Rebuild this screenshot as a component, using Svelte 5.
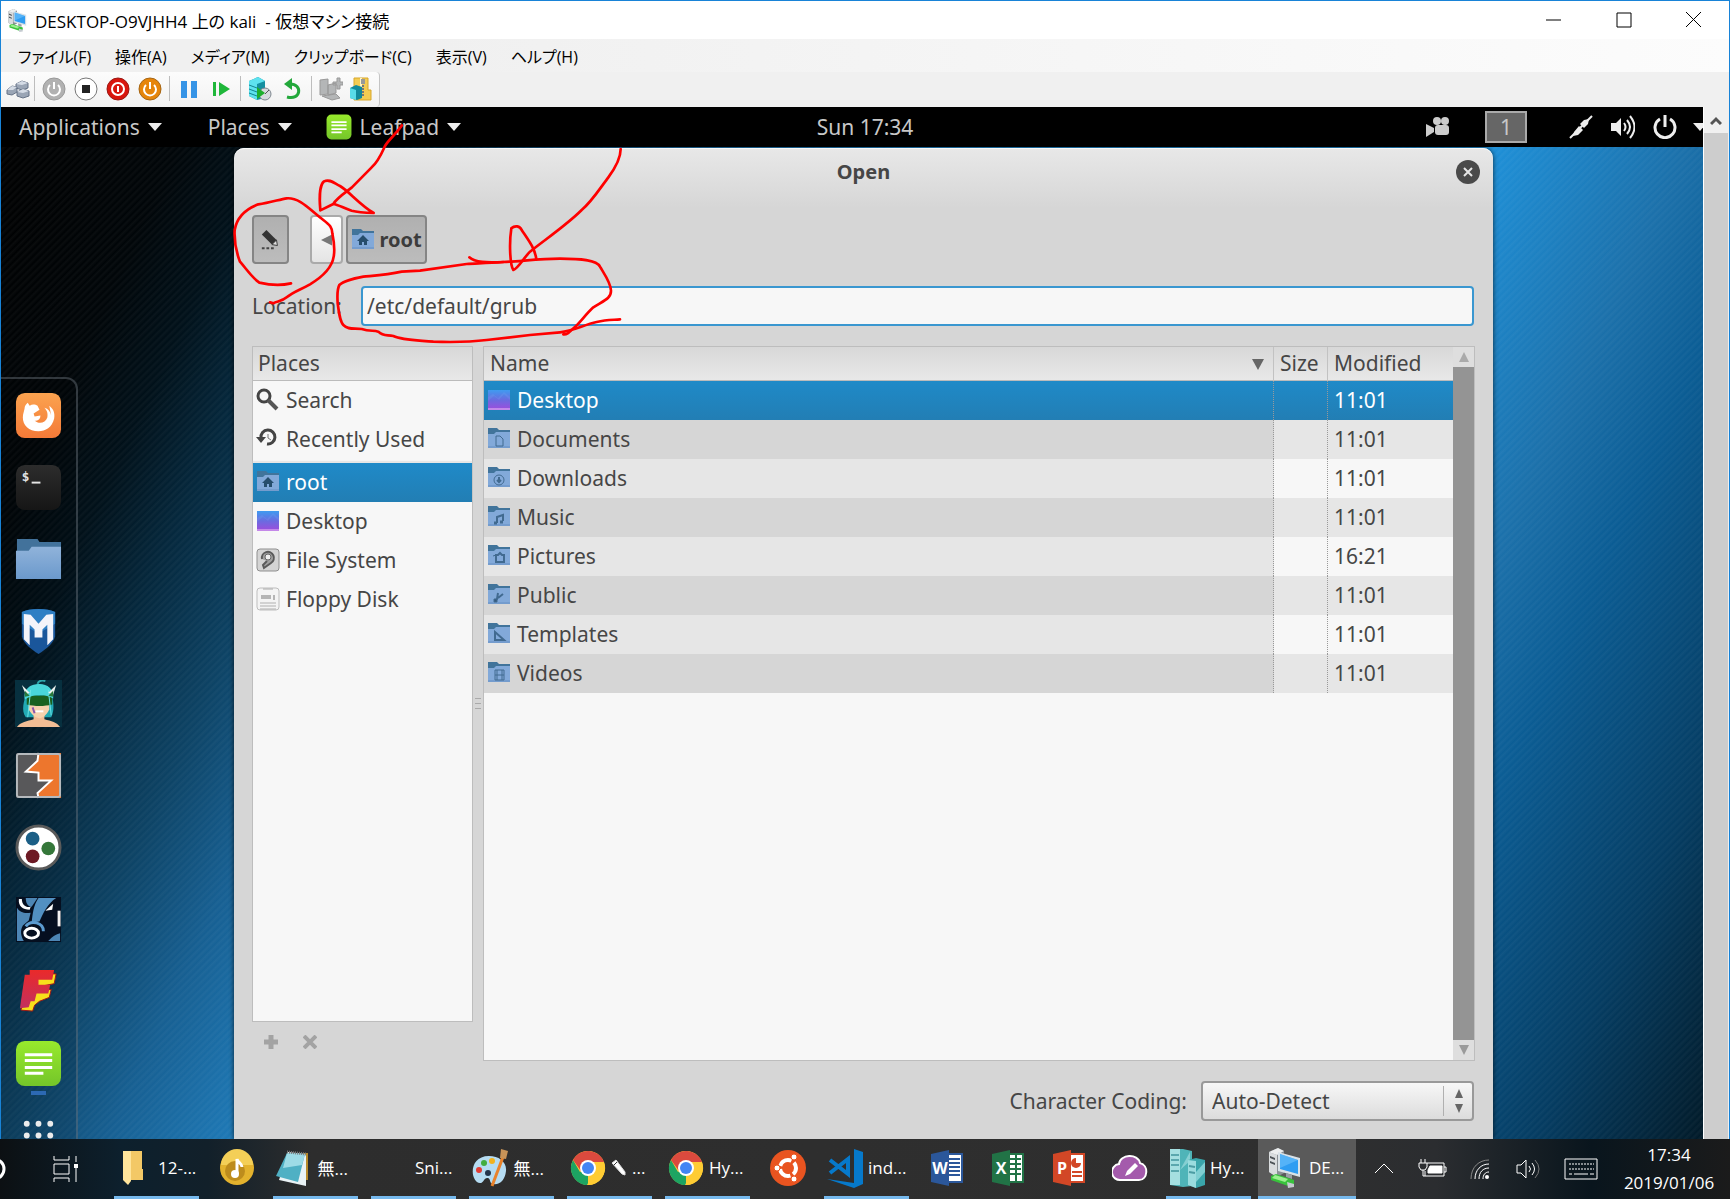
<script>
  const menus = ['ファイル(F)', '操作(A)', 'メディア(M)', 'クリップボード(C)', '表示(V)', 'ヘルプ(H)'];
  const places = [
    { label: 'Search', icon: 'search' },
    { label: 'Recently Used', icon: 'recent' },
    { label: 'root', icon: 'home', active: true },
    { label: 'Desktop', icon: 'desktop' },
    { label: 'File System', icon: 'disk' },
    { label: 'Floppy Disk', icon: 'floppy' }
  ];
  const files = [
    { name: 'Desktop', time: '11:01', icon: 'desktop', active: true },
    { name: 'Documents', time: '11:01', icon: 'documents' },
    { name: 'Downloads', time: '11:01', icon: 'downloads' },
    { name: 'Music', time: '11:01', icon: 'music' },
    { name: 'Pictures', time: '16:21', icon: 'pictures' },
    { name: 'Public', time: '11:01', icon: 'public' },
    { name: 'Templates', time: '11:01', icon: 'templates' },
    { name: 'Videos', time: '11:01', icon: 'videos' }
  ];
  const dock = ['firefox', 'terminal', 'files', 'metasploit', 'armitage', 'burp', 'maltego', 'beef', 'faraday', 'leafpad', 'apps'];
  const tasks = [
    { icon: 'folder', label: '12-...', wide: true },
    { icon: 'tune', name: 'Music' },
    { icon: 'notepad', label: '無...', wide: true },
    { icon: 'blank', label: 'Sni...', wide: true },
    { icon: 'paint', label: '無...', wide: true },
    { icon: 'chrome', label: '...', pencil: true, wide: true },
    { icon: 'chrome', label: 'Hy...', wide: true },
    { icon: 'ubuntu', name: 'Ubuntu' },
    { icon: 'code', label: 'ind...', wide: true },
    { icon: 'word', name: 'Word' },
    { icon: 'excel', name: 'Excel' },
    { icon: 'ppt', name: 'PowerPoint' },
    { icon: 'cloud', name: 'Notes' },
    { icon: 'hyperv', label: 'Hy...', wide: true },
    { icon: 'vm', label: 'DE...', wide: true, current: true }
  ];
  let location = $state('/etc/default/grub');
</script>

{#snippet vmIcon()}
  <path d="M1 4l9-4 6 3v22l-7 4-8-5z" fill="#8b9196" />
  <path d="M1 4l8 3v22l-8-5z" fill="#d9dcde" />
  <path d="M1 4l9-4 6 3-7 4z" fill="#eceeef" />
  <path d="M2 8l5 2v2l-5-2zM2 13l5 2v2l-5-2z" fill="#4d5358" />
  <path d="M10 4l22 6v19l-22-6z" fill="#d9e2e8" />
  <path d="M12 6l18 6v14l-18-5z" fill="#2f9df2" />
  <path d="M12 6l18 6-18 8z" fill="#6fc1fb" opacity=".6" />
  <path d="M18 25l6 2v4l-6-2z" fill="#9aa1a6" />
  <path d="M3 28l5-2 18 6v4l-6 2-17-6z" fill="#38c23c" />
  <path d="M7 27l13 4-3 3-13-4z" fill="#9bf08f" />
  <path d="M19 34l7 2v3l-6 1z" fill="#c5cbd0" />
{/snippet}

{#snippet small(kind)}
  <svg class="small-icon" viewBox="0 0 24 24" aria-hidden="true">
    {#if kind === 'search'}
      <circle cx="8" cy="8" r="6" fill="none" stroke="#444" stroke-width="3" />
      <path d="M12 12l9 9" stroke="#555" stroke-width="4" />
    {:else if kind === 'recent'}
      <path d="M5 11a7 7 0 1 1 6 6" fill="none" stroke="#444" stroke-width="3" />
      <path d="M0 10h10l-5 6z" fill="#444" />
      <path d="M12 7v4l3 2" fill="none" stroke="#777" stroke-width="1" />
    {:else if kind === 'desktop'}
      <defs>
        <linearGradient id="violet" x2="0" y2="1">
          <stop stop-color="#3f9bf0" /><stop offset=".5" stop-color="#6a6be0" /><stop offset="1" stop-color="#a04bdc" />
        </linearGradient>
      </defs>
      <rect x="1" y="2" width="22" height="20" fill="url(#violet)" />
      <path d="M1 13l6-5 5 4 5-6 6 6v-3l-6-5-6 6-5-4-5 3z" fill="#9cc3f8" opacity=".12" />
      <path d="M1 21h22" stroke="#ecc3f5" stroke-width="1" />
    {:else if kind === 'disk'}
      <rect x="1" y="1" width="22" height="22" rx="3" fill="#d4d4d4" stroke="#8f8f8f" />
      <path d="M6 11a6 6 0 1 1 9 4l-7 5-1-3 4-4" fill="#a0a0a0" stroke="#5a5a5a" stroke-width="2" />
      <circle cx="12" cy="9" r="3" fill="#eee" stroke="#666" />
    {:else if kind === 'floppy'}
      <rect x="1" y="1" width="22" height="22" rx="3" fill="#f4f4f4" stroke="#bdbdbd" />
      <path d="M5 8h10v4H5zM17 8h2v5h-2z" fill="#b5b5b5" />
      <path d="M4 16h16M4 19h16M4 22h16" stroke="#b0b0b0" stroke-width="1" />
      <path d="M7 2h10" stroke="#aaa" />
    {:else}
      <path d="M1 1h9l2 2h11v5H1z" fill="#41749b" />
      <path d="M1 7h6l2-2h14v16H1z" fill="#82a9d9" />
      <path d="M1 20h22" stroke="#668fc2" />
      <g fill="none" stroke="#416a90" stroke-width="1">
        {#if kind === 'home'}
          <path d="M12 7l6 6h-2v4h-3v-3h-2v3H8v-4H6z" fill="#264d6c" stroke="none" />
        {:else if kind === 'documents'}
          <path d="M9 9h4l3 3v7H9z" />
        {:else if kind === 'downloads'}
          <circle cx="12" cy="14" r="5" /><path d="M12 11v5M10 14l2 2 2-2" stroke-width="2" />
        {:else if kind === 'music'}
          <path d="M10 18v-6l6-2v6" stroke-width="2" /><path d="M7 18h3M13 17h3" stroke-width="3" />
        {:else if kind === 'pictures'}
          <path d="M9 11h2l2-2 2 2h2v7H9z" stroke-width="2" /><path d="M6 12l3-1" />
        {:else if kind === 'public'}
          <path d="M8 18l2-2 1-6M11 15l5-4" stroke-width="2" /><path d="M7 16h3v3H7z" fill="#35597c" />
        {:else if kind === 'templates'}
          <path d="M8 10v8h9z" stroke-width="2" />
        {:else if kind === 'videos'}
          <path d="M8 9h9v10H8zM8 14h9M10 9v10M15 9v10" />
        {/if}
      </g>
    {/if}
  </svg>
{/snippet}

{#snippet dockIcon(kind)}
  <svg viewBox="0 0 48 48" aria-hidden="true">
    {#if kind === 'firefox'}
      <defs>
        <linearGradient id="fox" x2="0" y2="1"><stop stop-color="#fba34f" /><stop offset="1" stop-color="#f47a38" /></linearGradient>
      </defs>
      <rect x="1" y="1" width="46" height="46" rx="9" fill="url(#fox)" />
      <path d="M10 15c1-2 2-3 3-4l2 3c3-2 6-1 8 0l2 4-6 4 1 3 6-1c0 4-3 6-6 5 4 4 11 3 13-3 1-5-1-8-3-10 4 1 6 4 7 8l-2-10c4 3 6 7 5 13-2 9-9 13-16 13C14 40 8 34 8 26c0-4 2-8 2-11z" fill="#fff" />
    {:else if kind === 'terminal'}
      <defs>
        <linearGradient id="term" x2="0" y2="1"><stop stop-color="#2c2c2c" /><stop offset="1" stop-color="#161616" /></linearGradient>
      </defs>
      <rect x="1" y="1" width="46" height="46" rx="9" fill="url(#term)" />
      <text x="7" y="17" class="prompt">$</text>
      <path d="M17 19h9" stroke="#e4e4e4" stroke-width="2" />
    {:else if kind === 'files'}
      <defs>
        <linearGradient id="dir" x2="0" y2="1"><stop stop-color="#90b3da" /><stop offset="1" stop-color="#6b99cc" /></linearGradient>
      </defs>
      <path d="M2 3h21l2 3h22v12H2z" fill="#42729b" />
      <path d="M1 15h13l3-4h30v33H1z" fill="url(#dir)" />
    {:else if kind === 'metasploit'}
      <path d="M24 1c7 0 13 1 17 3v25c-2 7-8 12-17 18C15 41 9 36 7 29V4c4-2 10-3 17-3z" fill="#1a569b" />
      <path d="M24 1c7 0 13 1 17 3v12L24 26 7 16V4c4-2 10-3 17-3z" fill="#2f7fc4" />
      <path d="M9 6l7 1 8 9 8-9 7-1v26l-6 6V17l-5 5v8h-8v-8l-5-5v21l-6-6z" fill="#f4f4fa" />
    {:else if kind === 'armitage'}
      <rect width="48" height="48" fill="#07303f" />
      <path d="M11 38c-5-7-2-16 1-26C16 2 32 2 37 12c2 9 4 18 0 26z" fill="#22a9b4" />
      <path d="M2 48c3-5 11-6 17-8v-8h11v8c7 2 13 3 16 8z" fill="#f2bd95" />
      <path d="M14 18h21v12c-3 6-6 8-10 9-5-1-8-4-11-9z" fill="#f6d2ad" />
      <path d="M12 13c8 4 17 4 26 0v12c-8 2-18 2-26 0z" fill="#19611f" />
      <path d="M10 20C8 8 17 4 25 4s15 5 14 15c-8-5-20-5-29 1z" fill="#49d6da" />
      <path d="M16 10l-3 28M34 10l3 26" stroke="#6ce4e6" stroke-width="1" />
      <path d="M23 4c1-3 4-4 8-3" fill="none" stroke="#2fa7ad" stroke-width="2" />
      <path d="M7 5l8 8-4 2zM42 5l-8 8 5 2z" fill="#e9f2ee" />
      <path d="M10 11l5 5-5 1zM39 11l-5 5 5 1z" fill="#2a7a3b" />
      <path d="M21 32h8" stroke="#fff" stroke-width="2" /><path d="M18 28l2 6" stroke="#8c57ad" stroke-width="2" />
    {:else if kind === 'burp'}
      <rect x="1" y="1" width="46" height="46" rx="2" fill="#58585a" />
      <path d="M23 1h24v46H24l-1-5 14-13H24v-8l-13-1 11-10z" fill="#ed762d" />
      <path d="M24 1l-1 8-12 11 13 1v8h13L23 42l1 5" fill="none" stroke="#fff" stroke-width="2" />
      <rect x="2" y="2" width="44" height="44" rx="2" fill="none" stroke="#b5b9bd" stroke-width="2" />
    {:else if kind === 'maltego'}
      <circle cx="24" cy="24" r="22" fill="#fff" stroke="#5a5a5a" stroke-width="3" />
      <circle cx="18" cy="15" r="7" fill="#1c5f86" /><circle cx="34" cy="25" r="7" fill="#35773a" /><circle cx="18" cy="33" r="7" fill="#6d1a24" />
    {:else if kind === 'beef'}
      <rect x="1" y="1" width="46" height="46" fill="#050f20" />
      <path d="M2 12c3 5 8 6 14 5l-2 8-6 5c-3 5-2 11 1 16H2z" fill="#4d86b5" />
      <path d="M11 2h12l-6 9c-4 0-6-4-6-9z" fill="#4d86b5" />
      <path d="M24 2h18C33 8 29 17 25 26l-8 1c1-9 2-18 7-25z" fill="#5290c2" />
      <path d="M11 31c5-7 18-4 18 5" fill="none" stroke="#5b9bd0" stroke-width="3" />
      <path d="M7 3c0 6 4 9 9 8l-1 3C8 14 3 10 4 3z" fill="#fff" />
      <path d="M31 15l8-7-1 6z" fill="#fff" /><path d="M45 15v16" stroke="#f3f3f3" stroke-width="3" />
      <ellipse cx="17" cy="38" rx="7" ry="5" fill="#050f20" stroke="#fff" stroke-width="3" />
      <path d="M34 46c4-5 8-7 12-8v8z" fill="#4d86b5" />
    {:else if kind === 'faraday'}
      <defs>
        <linearGradient id="flash" x2="0" y2="1"><stop stop-color="#ea2a2a" /><stop offset="1" stop-color="#c2305e" /></linearGradient>
      </defs>
      <path d="M18 6h24l-2 10-15 3v3h12l-2 8-10 4-5 4-2 6-12-1z" fill="#f7df1b" stroke="#a01515" stroke-width="1" />
      <path d="M15 2h25l-2 10H24v5h12l-2 9H22l-2 8h-4l-2 6-9 1L10 7h5z" fill="url(#flash)" />
    {:else if kind === 'leafpad'}
      <defs>
        <linearGradient id="leaf" x2="0" y2="1"><stop stop-color="#98ea2c" /><stop offset="1" stop-color="#74c52a" /></linearGradient>
      </defs>
      <rect x="1" y="1" width="46" height="46" rx="9" fill="url(#leaf)" />
      <path d="M10 15h28M10 21h28M10 28h28M10 34h19" stroke="#fff" stroke-width="3" />
    {:else}
      <g fill="#ececec">
        {#each [12, 24, 36] as cy}
          {#each [12, 24, 36] as cx}<circle {cx} {cy} r="3" />{/each}
        {/each}
      </g>
    {/if}
  </svg>
{/snippet}

{#snippet taskIcon(kind)}
  <svg class="task-icon" viewBox="0 0 36 40" aria-hidden="true">
    {#if kind === 'folder'}
      <path d="M9 3h16v18h1v11H9z" fill="#f3c866" /><path d="M6 3h8v30l-3 4-5-5z" fill="#ffe49b" />
    {:else if kind === 'tune'}
      <circle cx="18" cy="20" r="17" fill="#e3b22d" /><path d="M2 17a16 16 0 0 1 32 0z" fill="#f4cf57" />
      <circle cx="16" cy="23" r="10" fill="#bd8c1d" /><path d="M18 26V11c1 4 5 4 5 8" fill="none" stroke="#fff" stroke-width="3" /><circle cx="16" cy="26" r="4" fill="#fff" />
    {:else if kind === 'notepad'}
      <path d="M27 5h5v27h-5z" fill="#b88b2b" /><path d="M12 4l18 2v32L3 32z" fill="#e9f2f5" /><path d="M11 5l18 1-7 28L0 28z" fill="#4fb0c4" />
      <path d="M11 5l18 1-3 11-19 3z" fill="#9ddbe6" /><path d="M11 4l19 2" stroke="#777" stroke-width="3" stroke-dasharray="1 1" />
    {:else if kind === 'paint'}
      <path d="M17 8c10 0 18 6 17 15s-6 14-13 13c-4-1-2-5-5-6-4-1-4 5-8 5C-2 34-4 8 17 8z" fill="#b5dcf2" />
      <circle cx="7" cy="22" r="3" fill="#e33b33" /><circle cx="12" cy="15" r="3" fill="#42ad3f" /><circle cx="20" cy="13" r="3" fill="#f2b21d" /><circle cx="16" cy="25" r="3" fill="#23344a" />
      <path d="M31 9L20 38" stroke="#e8822b" stroke-width="3" /><path d="M29 1l7 2-2 8-6-1z" fill="#c79358" />
    {:else if kind === 'chrome'}
      <circle cx="18" cy="20" r="17" fill="#fc3" />
      <path d="M10 24l8-4v17h-3A17 17 0 0 1 3 12z" fill="#1da462" />
      <path d="M3 12a17 17 0 0 1 31 2H18l-7 9z" fill="#db4a3e" />
      <path d="M25 22l-8 15A17 17 0 0 0 34 14H18z" fill="#fc3" />
      <circle cx="18" cy="20" r="8" fill="#fff" /><circle cx="18" cy="20" r="6" fill="#4285f4" />
    {:else if kind === 'ubuntu'}
      <circle cx="18" cy="20" r="18" fill="#e95420" /><circle cx="18" cy="20" r="8" fill="none" stroke="#fff" stroke-width="4" stroke-dasharray="14 3" stroke-dashoffset="7" />
      <g fill="#fff" stroke="#e95420"><circle cx="7" cy="20" r="3" /><circle cx="24" cy="9" r="3" /><circle cx="24" cy="31" r="3" /></g>
    {:else if kind === 'code'}
      <path d="M27 1l9 3v32l-9 4z" fill="#0679cb" /><path d="M0 31l27 4v5z" fill="#0679cb" />
      <path d="M3 12l18 14V11L3 25" fill="none" stroke="#0679cb" stroke-width="4" />
    {:else if kind === 'word' || kind === 'excel' || kind === 'ppt'}
      {@const tint = kind === 'word' ? '#2b579a' : kind === 'excel' ? '#217346' : '#d24726'}
      <path d="M18 6h15v28H18z" fill="#fff" stroke={tint} stroke-width="2" />
      {#if kind === 'word'}
        <path d="M20 11h11M20 15h11M20 19h11M20 23h11M20 27h11" stroke={tint} stroke-width="2" />
      {:else if kind === 'excel'}
        <path d="M20 11h11M20 16h11M20 21h11M20 26h11M26 7v26" stroke={tint} stroke-width="2" />
      {:else}
        <circle cx="25" cy="15" r="5" fill={tint} /><path d="M25 15V9h6v6z" fill="#fff" /><path d="M21 24h10M21 28h10" stroke={tint} stroke-width="2" />
      {/if}
      <path d="M2 6l18-4v36L2 34z" fill={tint} />
      <text x="11" y="26" class="letter">{kind === 'word' ? 'W' : kind === 'excel' ? 'X' : 'P'}</text>
    {:else if kind === 'cloud'}
      <path d="M9 32a8 8 0 0 1-2-16c1-10 19-11 21-1 9 2 8 17-1 17z" fill="#a45bac" stroke="#fff" stroke-width="2" />
      <path d="M13 28l2-5 8-8 3 3-8 8z" fill="#fff" />
    {:else if kind === 'hyperv'}
      <path d="M1 1h13l9 2v35l-9 1-13-2z" fill="#4fb4b8" /><path d="M1 1h10v36H1z" fill="#a5dfe0" /><path d="M2 7h8M2 12h8M2 17h8M2 23h8" stroke="#5aa7ad" stroke-width="2" />
      <path d="M11 22l10-18v9z" fill="#86cfd2" />
      <path d="M19 12l8-2 9 2v25l-9 3-8-3z" fill="#3aa5aa" /><path d="M19 12l8 1v27l-8-3z" fill="#9adcde" /><path d="M20 18l6 1M20 24l6 1" stroke="#4c9ca3" stroke-width="2" />
      <path d="M27 24l9-10v10l-9 10z" fill="#7fcfd2" />
    {:else if kind === 'vm'}
      {@render vmIcon()}
    {/if}
  </svg>
{/snippet}

<div class="screen">
  <main class="window">
    <header class="titlebar">
      <svg class="app-icon" viewBox="0 0 32 40" aria-hidden="true">{@render vmIcon()}</svg>
      <h1>DESKTOP-O9VJHH4 上の kali &nbsp;- 仮想マシン接続</h1>
      <div class="controls">
        <button aria-label="Minimize"><svg viewBox="0 0 16 16"><path d="M0 8h15" /></svg></button>
        <button aria-label="Maximize"><svg viewBox="0 0 16 16"><path d="M1 1h14v14H1z" /></svg></button>
        <button aria-label="Close"><svg viewBox="0 0 16 16"><path d="M0 0l15 15M15 0L0 15" /></svg></button>
      </div>
    </header>

    <nav class="menubar">
      {#each menus as menu}<button>{menu}</button>{/each}
    </nav>

    <div class="toolbar">
      <div class="tools">
        <button aria-label="Ctrl+Alt+Del">
          <svg viewBox="0 0 24 24"><path d="M1 13l5-4 5 1v5l-5 3-5-1zM10 7l6-3 6 2v5l-6 2-6-2zM11 15l6-3 6 2v5l-6 2-6-2z" fill="#9aa5b5" stroke="#667387" /><path d="M10 7l6-3 6 2-6 2zM11 15l6-3 6 2-6 2zM1 13l5-4 5 1-4 3z" fill="#d5dce6" /></svg>
        </button>
        <i></i>
        <button aria-label="Start"><svg viewBox="0 0 24 24"><circle cx="12" cy="12" r="11" fill="#b1b1b1" stroke="#999" /><path d="M8 8a6 6 0 1 0 8 0M12 5v7" fill="none" stroke="#fff" stroke-width="2" /></svg></button>
        <button aria-label="Turn off"><svg viewBox="0 0 24 24"><circle cx="12" cy="12" r="11" fill="#fff" stroke="#777" /><path d="M8 8h8v8H8z" fill="#222" /></svg></button>
        <button aria-label="Shut down"><svg viewBox="0 0 24 24"><circle cx="12" cy="12" r="11" fill="#d9150d" stroke="#991914" /><circle cx="12" cy="12" r="6" fill="none" stroke="#fff" stroke-width="2" /><path d="M12 9v6" stroke="#fff" stroke-width="2" /></svg></button>
        <button aria-label="Save"><svg viewBox="0 0 24 24"><circle cx="12" cy="12" r="11" fill="#e6850a" stroke="#a66615" /><path d="M8 8a6 6 0 1 0 8 0M12 5v7" fill="none" stroke="#fff" stroke-width="2" /></svg></button>
        <i></i>
        <button aria-label="Pause"><svg viewBox="0 0 24 24"><path d="M4 4h6v17H4zM14 4h6v17h-6z" fill="#3694e6" /></svg></button>
        <button aria-label="Reset"><svg viewBox="0 0 24 24"><path d="M4 5h3v14H4zM10 5l11 7-11 7z" fill="#1fb73a" /></svg></button>
        <i></i>
        <button aria-label="Checkpoint"><svg viewBox="0 0 24 24"><path d="M1 4l9-4 7 4v17l-8 2-8-4z" fill="#158fa0" /><path d="M1 4l8 3v16l-8-4zM1 4l9-4 7 4-8 3z" fill="#5ee2ef" /><path d="M1 8l8 3M1 12l8 3M1 16l8 3" stroke="#14838f" /><circle cx="17" cy="17" r="6" fill="#d7dade" stroke="#808890" /><path d="M17 17l4-4" stroke="#555" /><path d="M9 10l8 6-8 6z" fill="#1eaf2d" /></svg></button>
        <button aria-label="Revert"><svg viewBox="0 0 24 24"><path d="M7 20c14 4 16-13 3-13" fill="none" stroke="#23a83b" stroke-width="3" /><path d="M12 1v12L4 7z" fill="#23a83b" /></svg></button>
        <i></i>
        <button aria-label="Enhanced session"><svg viewBox="0 0 24 24"><path d="M1 3l8-1v15l-8 1zM9 8l8-2v10l-8 2zM18 1h3v4h3v3h-3v4h-3V8h-4V5h4zM3 19l14-2 4 4-8 2z" fill="#b4b6b7" stroke="#999" /></svg></button>
        <button aria-label="Share"><svg viewBox="0 0 24 24"><path d="M5 1h14v12h3v10H5z" fill="#f4cc52" stroke="#d8a72a" /><path d="M12 1v12" stroke="#fff3c4" stroke-width="2" /><path d="M14 2v18" stroke="#777" stroke-width="2" stroke-dasharray="2 1" /><path d="M12 2h4v5h-4z" fill="#999" /><path d="M1 11l6-3 6 2v11l-5 2-7-2z" fill="#128a9a" /><path d="M1 11l6 2v10l-6-2z" fill="#58dce8" /></svg></button>
      </div>
    </div>

    <div class="viewport">
      <section class="guest">
        <header class="panel">
          <div class="panel-left">
            <button>Applications <b class="down"></b></button>
            <button>Places <b class="down"></b></button>
            <button class="leaf"><span>{@render dockIcon('leafpad')}</span>Leafpad <b class="down"></b></button>
          </div>
          <time>Sun 17:34</time>
          <div class="panel-right">
            <svg viewBox="0 0 24 20"><g fill="#ccc"><circle cx="11" cy="4" r="4" /><circle cx="19" cy="4" r="4" /><rect x="9" y="8" width="14" height="10" rx="3" /><path d="M0 7l8 4v4l-8 5z" /></g></svg>
            <span class="workspace">1</span>
            <svg class="plug" viewBox="0 0 24 24"><path d="M1 23L23 1" stroke="#eee" stroke-width="2" /><path d="M5 17l5-6 4 4-5 5-5 1zM11 9l4-4 5-1-1 5-4 4z" fill="#eee" /></svg>
            <svg viewBox="0 0 24 24"><path d="M0 8h5l5-5v18l-5-5H0z" fill="#eee" /><path d="M13 8q3 4 0 8M16 5q6 7 0 14M19 1q9 11 0 22" fill="none" stroke="#eee" stroke-width="2" /></svg>
            <svg class="power" viewBox="0 0 24 24"><path d="M7 4a10 10 0 1 0 10 0M12 0v12" fill="none" stroke="#eee" stroke-width="3" /></svg>
            <b class="down"></b>
          </div>
        </header>

        <div class="desktop">
          <aside class="dock">
            {#each dock as item}
              <button aria-label={item} class:running={item === 'leafpad'}>{@render dockIcon(item)}</button>
            {/each}
          </aside>

          <form class="dialog" onsubmit={(e) => e.preventDefault()}>
            <div class="dialog-title">
              <h2>Open</h2>
              <button type="button" aria-label="Close dialog"><svg viewBox="0 0 24 24"><circle cx="12" cy="12" r="12" fill="#4a4a4a" /><path d="M8 8l8 8M16 8l-8 8" stroke="#e6e6e6" stroke-width="2" /></svg></button>
            </div>

            <div class="path">
              <button type="button" class="pressed pencil" aria-label="Type a file name">
                <svg viewBox="0 0 24 24"><path d="M2 6l5-5 11 11v5h-5z" fill="#333" /><path d="M13 17l5-5 1 6z" fill="#ddd" stroke="#333" /><path d="M2 21h3M7 21h3M12 21h3" stroke="#444" stroke-width="2" /></svg>
              </button>
              <button type="button" class="back" aria-label="Back"><svg viewBox="0 0 12 12"><path d="M12 0v12L0 6z" fill="#777" /></svg></button>
              <button type="button" class="pressed root">{@render small('home')}root</button>
            </div>

            <div class="location">
              <label for="location">Location:</label>
              <input id="location" type="text" bind:value={location} />
            </div>

            <div class="panes">
              <div class="side">
                <div class="places">
                  <div class="head">Places</div>
                  {#each places as place}
                    <button type="button" class:active={place.active}>{@render small(place.icon)}{place.label}</button>
                  {/each}
                </div>
                <div class="edit">
                  <button type="button" aria-label="Add bookmark"><svg viewBox="0 0 14 14"><path d="M7 0v14M0 7h14" stroke="#a3a3a3" stroke-width="5" /></svg></button>
                  <button type="button" aria-label="Remove bookmark"><svg viewBox="0 0 14 14"><path d="M1 1l12 12M13 1L1 13" stroke="#a3a3a3" stroke-width="4" /></svg></button>
                </div>
              </div>
              <div class="grip"></div>
              <div class="list">
                <div class="rows">
                  <table>
                    <thead>
                      <tr><th class="name">Name <b class="sort"></b></th><th class="size">Size</th><th class="modified">Modified</th></tr>
                    </thead>
                    <tbody>
                      {#each files as file}
                        <tr class:active={file.active}>
                          <td class="name"><span>{@render small(file.icon)}{file.name}</span></td>
                          <td></td>
                          <td>{file.time}</td>
                        </tr>
                      {/each}
                    </tbody>
                  </table>
                </div>
                <div class="scroll"><b class="tri up"></b><div></div><b class="tri"></b></div>
              </div>
            </div>

            <div class="coding">
              <label for="coding">Character Coding:</label>
              <div class="combo">
                <select id="coding"><option>Auto-Detect</option></select>
                <span class="arrows"><b class="tri up"></b><b class="tri"></b></span>
              </div>
            </div>
          </form>
        </div>
      </section>
      <div class="outer-scroll">
        <button aria-label="Scroll up"><svg viewBox="0 0 12 10"><path d="M1 8l5-5 5 5" fill="none" stroke="#555" stroke-width="3" /></svg></button>
        <div></div>
      </div>
    </div>
  </main>

  <footer class="taskbar">
    <button class="cortana" aria-label="Search"><svg viewBox="0 0 24 24"><circle cx="12" cy="12" r="10" fill="none" stroke="#fff" stroke-width="3" /></svg></button>
    <button class="taskview" aria-label="Task view"><svg viewBox="0 0 26 26"><path d="M1 0v4h15V0M1 26v-4h15v4M1 8h15v10H1zM23 0v6M23 12v14" fill="none" stroke="#fff" stroke-width="1" /><path d="M21 8h4v4h-4z" fill="#fff" /></svg></button>
    <div class="tasks">
      {#each tasks as task}
        <button class:wide={task.wide} class:current={task.current} aria-label={task.name ?? task.label}>
          <div class="face">
            {@render taskIcon(task.icon)}
            {#if task.pencil}
              <svg class="pen" viewBox="0 0 16 18" aria-hidden="true"><path d="M1 4l4-3 9 12v3l-3-1z" fill="#fff" stroke="#ddd" /><path d="M3 6l3-3" stroke="#333" /></svg>
            {/if}
            {#if task.label}<span>{task.label}</span>{/if}
          </div>
        </button>
      {/each}
    </div>
    <div class="tray">
      <button aria-label="Hidden icons"><svg viewBox="0 0 34 34"><path d="M8 21l9-9 9 9" /></svg></button>
      <button aria-label="Battery"><svg viewBox="0 0 34 34"><path d="M12 11h17v13H10v-5M29 15h2v5h-2" /><path d="M15 14h12v7H13v-3z" fill="#fff" /><path d="M6 7v4M10 7v4M4 11h8v4l-2 3H6l-2-3zM8 18v6h2" /></svg></button>
      <button aria-label="Network"><svg viewBox="0 0 34 34"><path d="M8 27C8 15 16 8 26 8" stroke="#888" /><path d="M12 27c0-9 6-15 14-15M16 27c0-7 4-11 10-11M20 27c0-4 2-7 6-7" /><circle cx="24" cy="25" r="2" fill="#fff" stroke="none" /></svg></button>
      <button aria-label="Volume"><svg viewBox="0 0 34 34"><path d="M6 13h4l5-5v18l-5-5H6zM18 14q3 3 0 6" /><path d="M21 11q5 6 0 12" /><path d="M24 8q8 9 0 18" stroke="#777" /></svg></button>
      <button class="keyboard" aria-label="Keyboard"><svg viewBox="0 0 34 34"><path d="M1 7h32v20H1z" /><path d="M5 12h25M5 17h25" stroke-dasharray="2 1" /><path d="M5 22h3M10 22h14M26 22h4" /></svg></button>
      <div class="clock"><time>17:34</time><time>2019/01/06</time></div>
    </div>
  </footer>

  <svg class="ink" viewBox="0 0 1320 720" aria-hidden="true">
    <path d="M546 46C530 70 505 90 495 108C485 130 475 155 455 172L395 233C370 252 350 265 340 282L301 301C298 270 298 225 312 214C330 205 345 222 360 228C385 242 420 285 461 309C430 308 410 306 395 302C370 294 355 284 340 282" />
    <path d="M213 520C180 528 140 523 118 518C95 502 80 478 60 455C50 430 42 400 44 360C50 325 70 300 115 283C150 278 180 268 200 265C240 262 270 300 310 330C330 345 336 352 337 370C343 400 343 430 341 440C335 480 300 505 270 523C240 540 220 545 200 562C185 575 170 573 160 580L150 577" />
    <path d="M1202 117C1202 145 1185 175 1165 202C1140 235 1115 275 1085 300C1040 345 980 385 930 425C910 445 895 475 880 480C870 465 867 400 874 355C885 345 900 348 905 360C925 390 945 415 949 448" />
    <path d="M748 442C765 458 800 458 850 456C900 454 960 446 1020 446C1080 446 1130 450 1140 470C1155 495 1173 520 1173 542C1173 565 1155 570 1120 592C1095 615 1075 645 1060 655C1045 670 1040 674 1030 673" />
    <path d="M850 456C800 460 770 460 740 462L600 482L545 485C500 495 460 497 430 500C400 506 370 512 358 525C350 540 352 560 353 580C357 610 360 635 370 645C385 660 400 654 425 657C450 665 460 660 475 665C490 680 500 674 520 678C545 690 580 690 640 695C700 697 760 695 800 690L930 675L1020 667C1060 663 1090 645 1130 636C1160 629 1180 630 1200 628" />
  </svg>
</div>

<style>
  :global(body) { margin: 0; }
  .screen, .screen * { box-sizing: border-box; }
  .screen {
    position: relative;
    display: flex;
    flex-direction: column;
    height: 100vh;
    overflow: hidden;
    font-family: "Noto Sans", "Noto Sans CJK JP", sans-serif;
  }
  button {
    display: flex;
    align-items: center;
    justify-content: center;
    margin: 0;
    padding: 0;
    border: 0;
    background: none;
    color: inherit;
    font: inherit;
    white-space: nowrap;
  }
  svg { display: block; flex: none; }
  h1, h2 { margin: 0; }

  .window {
    flex: 1;
    min-height: 0;
    display: flex;
    flex-direction: column;
    border: 1px solid #1883d7;
    border-bottom: 0;
    background: #f0f0f0;
  }
  .titlebar, .menubar, .taskbar { font-family: "Open Sans", "Noto Sans CJK JP", sans-serif; font-feature-settings: "palt"; }
  .titlebar {
    display: flex;
    align-items: center;
    height: 38px;
    padding-left: 6px;
    gap: 8px;
    background: #fff;
    color: #000;
  }
  .app-icon { width: 20px; height: 23px; }
  h1 { font-size: 17px; font-weight: 400; white-space: nowrap; }
  .controls { display: flex; margin-left: auto; }
  .controls button { width: 70px; height: 38px; }
  .controls svg { width: 16px; height: 16px; fill: none; stroke: #000; stroke-width: 1; }
  .menubar {
    display: flex;
    gap: 24px;
    height: 33px;
    padding-left: 17px;
    background: linear-gradient(90deg, #f0f0f0 25%, #fcfcfc);
    color: #000;
    font-size: 16px;
  }
  .toolbar { display: flex; height: 35px; }
  .tools {
    display: flex;
    align-items: center;
    padding: 0 4px 2px 4px;
    border-right: 1px solid #c4c4c4;
    border-radius: 0 4px 4px 0;
    background: linear-gradient(#fcfcfc, #f2f2f2);
  }
  .tools button { width: 32px; height: 32px; }
  .tools button:first-child { width: 26px; }
  .tools button:last-child { width: 28px; }
  .tools svg { width: 24px; height: 24px; }
  .tools i { width: 1px; height: 25px; margin: 0 3px; background: #bdbdbd; }

  .viewport { flex: 1; min-height: 0; display: flex; overflow: hidden; }
  .guest {
    flex: 1;
    min-width: 0;
    display: flex;
    flex-direction: column;
    overflow: hidden;
    color: #464646;
    font-size: 21px;
  }
  .panel, .desktop { width: calc(100% + 26px); }
  .panel {
    display: grid;
    grid-template-columns: 1fr auto 1fr;
    align-items: center;
    height: 40px;
    background: #000;
    color: #c8c8c8;
    flex: none;
  }
  .panel-left { display: flex; gap: 46px; padding-left: 18px; }
  .panel-left button { gap: 8px; }
  .panel-left .leaf { margin-left: -12px; }
  .leaf svg { width: 26px; height: 26px; }
  .down { border: 7px solid transparent; border-top: 8px solid #eee; border-bottom: 0; }
  .panel-right { display: flex; justify-content: flex-end; align-items: center; padding-right: 22px; }
  .panel-right svg { width: 24px; height: 24px; }
  .workspace {
    width: 42px;
    height: 32px;
    margin: 0 42px 0 35px;
    border: 2px solid #aaa;
    background: #666;
    text-align: center;
    line-height: 28px;
  }
  .panel-right .plug { margin-right: 18px; }
  .panel-right .power { margin: 0 16px 0 18px; }

  .desktop {
    flex: 1;
    min-height: 0;
    display: flex;
    align-items: stretch;
    overflow: hidden;
    background:
      repeating-linear-gradient(135deg, transparent 0, rgba(255, 255, 255, 0.04) 2px, transparent 5px),
      linear-gradient(115deg, #000 0, #000508 8%, #001019 12%, #04273c 16%, #0c4264 21%, #165f92 26%, #1e7ab8 32%, #2090d8 45%, #1e90d8 68%, #1b70aa 77%, #0a5c94 82%, #043c62 91%, #00141f);
  }
  .dock {
    flex: none;
    width: 77px;
    height: 900px;
    margin-top: 230px;
    border: 2px solid rgba(120, 130, 140, 0.4);
    border-left: 0;
    border-radius: 0 12px 0 0;
    background: rgba(0, 0, 0, 0.12);
  }
  .dock button { position: relative; width: 75px; height: 72px; }
  .dock svg { width: 47px; height: 47px; }
  .running::after {
    content: "";
    position: absolute;
    left: 30px;
    bottom: 4px;
    width: 15px;
    height: 4px;
    background: #2c69b3;
  }
  .prompt { fill: #e4e4e4; font: bold 13px "DejaVu Sans Mono", monospace; }

  .dialog {
    flex: 1;
    display: flex;
    flex-direction: column;
    margin: 1px 236px 0 156px;
    padding: 0 18px 18px;
    border-radius: 10px 10px 0 0;
    background: linear-gradient(#e8e8e8, #d6d6d6 60px);
    box-shadow: 0 0 5px rgba(0, 0, 0, 0.7), inset 0 1px #f8f8f8;
  }
  .dialog-title { display: grid; grid-template-columns: 36px 1fr 36px; height: 67px; }
  h2 { grid-column: 2; font-size: 20px; line-height: 47px; text-align: center; }
  .dialog-title button { width: 24px; height: 47px; margin-left: 17px; }
  .dialog-title svg { width: 24px; height: 24px; }
  .path { display: flex; height: 49px; }
  .path button { border: 2px solid #999; border-radius: 4px; background: linear-gradient(#fff, #e4e4e4); }
  .path .pressed { border-color: #858585; background: linear-gradient(#b0b0b0, #bcbcbc); }
  .pencil { width: 37px; margin-right: 21px; }
  .pencil svg { width: 22px; height: 24px; }
  .path .back { width: 33px; margin-right: 3px; border-color: #aaa; }
  .back svg { width: 11px; height: 12px; }
  .path .root { width: 81px; gap: 4px; font-size: 20px; font-weight: 700; color: #3c3c3c; }
  .location { display: flex; align-items: center; margin: 22px 0 20px; padding-right: 1px; }
  .location label { width: 109px; }
  input {
    flex: 1;
    min-width: 0;
    height: 40px;
    padding: 0 4px;
    border: 2px solid #3a97d0;
    border-radius: 4px;
    outline: 0;
    background: #f7f7f7;
    color: #464646;
    font: inherit;
  }
  .panes { flex: 1; min-height: 0; display: flex; }
  .side { width: 221px; display: flex; flex-direction: column; }
  .places { flex: 1; border: 1px solid #bdbdbd; background: #f7f7f7; }
  .head, th {
    height: 34px;
    padding: 0 5px;
    border-bottom: 1px solid #bbb;
    background: linear-gradient(#d8d8d8, #e8e8e8);
    font-weight: 400;
    line-height: 33px;
    text-align: left;
  }
  .places button { width: 100%; height: 39px; justify-content: flex-start; gap: 6px; padding: 0 0 1px 3px; }
  .small-icon { width: 24px; height: 24px; }
  .places .active { margin-top: 4px; background: linear-gradient(#1f8ac8, #227eb4); color: #fff; box-shadow: 0 -2px 1px #e6e6e6; }
  .edit { display: flex; height: 39px; padding-left: 12px; gap: 25px; }
  .edit svg { width: 14px; height: 14px; }
  .grip {
    align-self: center;
    width: 6px;
    height: 11px;
    margin: 0 2px;
    background: repeating-linear-gradient(#aaa 0 1px, transparent 1px 5px);
  }
  .list { flex: 1; display: flex; border: 1px solid #bdbdbd; background: #f7f7f7; }
  .rows { flex: 1; }
  table { width: 100%; border-collapse: separate; border-spacing: 0; table-layout: fixed; }
  th { padding: 0 6px; border-right: 1px solid #c2c2c2; }
  th:last-child { border-right: 0; }
  .size { width: 54px; }
  .modified { width: 125px; }
  .sort { float: right; margin: 12px 3px 0 0; border: 6px solid transparent; border-top: 11px solid #666; border-bottom: 0; }
  td { height: 39px; padding: 0 6px 1px; line-height: 38px; }
  td:not(:last-child) { border-right: 1px dotted #999; }
  .name span { display: flex; align-items: center; gap: 6px; }
  td.name { padding-left: 3px; background: #e6e6e6; }
  tbody tr:nth-child(even) { background: #e6e6e6; }
  tbody tr:nth-child(even) .name { background: #d6d6d6; }
  tbody .active td { background: linear-gradient(#1f8ac8, #227eb4); color: #fff; }
  .scroll { display: flex; flex-direction: column; align-items: center; width: 21px; background: #dedede; }
  .scroll div { flex: 1; width: 21px; background: #949494; }
  .tri { margin: 5px; border: 5px solid transparent; border-top: 10px solid #9a9a9a; border-bottom: 0; }
  .tri.up { border-top: 0; border-bottom: 10px solid #aaa; }
  .coding { display: flex; justify-content: flex-end; align-items: center; gap: 14px; margin-top: 20px; padding-right: 1px; }
  .combo { display: grid; width: 273px; height: 40px; }
  select {
    grid-area: 1 / 1;
    appearance: none;
    padding: 0 9px;
    border: 2px solid #999;
    border-radius: 4px;
    background: linear-gradient(#f7f7f7, #dcdcdc);
    color: #464646;
    font: inherit;
  }
  .arrows {
    grid-area: 1 / 1;
    justify-self: end;
    align-self: center;
    display: flex;
    flex-direction: column;
    align-items: center;
    gap: 6px;
    width: 31px;
    height: 30px;
    padding-top: 3px;
    border-left: 1px solid #b0b0b0;
    pointer-events: none;
  }
  .arrows .tri { margin: 0; border-width: 9px 4px 0; border-top-color: #666; }
  .arrows .up { border-width: 0 4px 9px; border-bottom-color: #666; }

  .outer-scroll { width: 26px; border-left: 1px solid #fff; padding-right: 1px; display: flex; flex-direction: column; }
  .outer-scroll button { height: 26px; padding-top: 2px; }
  .outer-scroll svg { width: 12px; height: 10px; }
  .outer-scroll div { flex: 1; background: #cdcdcd; }

  .taskbar {
    flex: none;
    display: flex;
    height: 60px;
    background: linear-gradient(90deg, #0c1013 0, #0d202d 7%, #12202a 12%, #2d2d2d 18%, #2f2f2f 76%, #2b2d30 83%, #09151d 92%, #1b1b1b);
    color: #fff;
    font-size: 17px;
    overflow: hidden;
  }
  .cortana { width: 26px; justify-content: flex-end; padding-right: 20px; overflow: hidden; }
  .cortana svg { width: 24px; height: 24px; }
  .taskview { width: 80px; margin-right: 2px; }
  .taskview svg { width: 26px; height: 26px; }
  .tasks { display: flex; }
  .tasks > button { width: 61px; align-items: stretch; }
  .tasks > .wide { width: 98px; padding: 0 7px 0 6px; }
  .tasks > .current { padding: 0; background: #5a5a5a; }
  .face { display: flex; align-items: center; justify-content: center; gap: 5px; padding-bottom: 3px; }
  .wide .face { width: 100%; justify-content: flex-start; padding: 0 0 0 3px; border-bottom: 3px solid #76b9ed; }
  .current .face { padding-left: 10px; }
  .wide .face span { margin-left: auto; padding-right: 10px; }
  .wide.current .face span { padding-right: 14px; }
  .task-icon { width: 36px; height: 40px; }
  .pen { width: 16px; height: 18px; }
  .letter { fill: #fff; font: bold 16px "Open Sans", sans-serif; text-anchor: middle; }
  .tray { display: flex; margin-left: auto; gap: 14px; padding-right: 12px; }
  .tray svg { width: 34px; height: 34px; fill: none; stroke: #fff; stroke-width: 1; }
  .tray .keyboard { margin-left: 5px; }
  .clock { display: flex; flex-direction: column; align-items: center; justify-content: center; width: 98px; margin-left: 8px; line-height: 28px; }

  .ink {
    position: absolute;
    left: 220px;
    top: 110px;
    width: 440px;
    height: 240px;
    fill: none;
    stroke: #f00;
    stroke-width: 8;
    stroke-linecap: round;
    stroke-linejoin: round;
    pointer-events: none;
  }
</style>
